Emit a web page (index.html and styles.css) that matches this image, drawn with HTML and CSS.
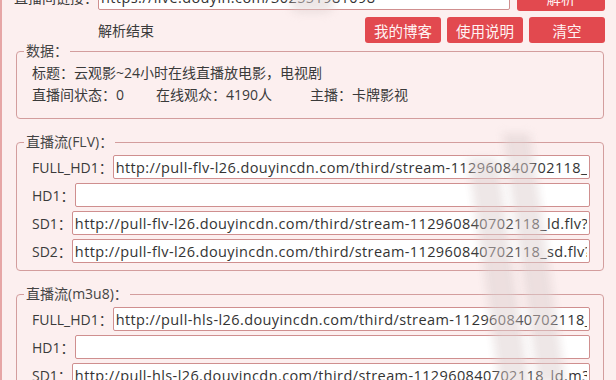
FILE: index.html
```html
<!DOCTYPE html>
<html lang="zh-CN">

<head>
    <meta charset="UTF-8">
    <meta name="viewport" content="width=device-width, initial-scale=1.0">
    <title>抖音直播解析</title>
    <link rel="stylesheet" href="styles.css">
</head>

<body>
    <div class="window">
        <div class="urlRow">
            <label class="urlLabel">直播间链接：</label>
            <input class="urlInput" type="text" value="https://live.douyin.com/302551981098">
            <button class="redBtn parseBtn">解析</button>
        </div>

        <div class="toolRow">
            <span class="status">解析结束</span>
            <button class="redBtn toolBtn">我的博客</button>
            <button class="redBtn toolBtn">使用说明</button>
            <button class="redBtn toolBtn">清空</button>
        </div>

        <fieldset class="group dataGroup">
            <legend>数据：</legend>
            <div class="dataLine">标题：云观影~24小时在线直播放电影，电视剧</div>
            <div class="dataLine">
                <span class="stat1">直播间状态：0</span>
                <span class="stat2">在线观众：4190人</span>
                <span>主播：卡牌影视</span>
            </div>
        </fieldset>

        <fieldset class="group">
            <legend>直播流(FLV)：</legend>
            <div class="streamRow">
                <label>FULL_HD1：</label>
                <input type="text" value="http://pull-flv-l26.douyincdn.com/third/stream-112960840702118_or4.flv?keeptime=00093a80">
            </div>
            <div class="streamRow">
                <label>HD1：</label>
                <input type="text" value="">
            </div>
            <div class="streamRow">
                <label>SD1：</label>
                <input type="text" value="http://pull-flv-l26.douyincdn.com/third/stream-112960840702118_ld.flv?keeptime=00093a80">
            </div>
            <div class="streamRow">
                <label>SD2：</label>
                <input type="text" value="http://pull-flv-l26.douyincdn.com/third/stream-112960840702118_sd.flv?keeptime=00093a80">
            </div>
        </fieldset>

        <fieldset class="group">
            <legend>直播流(m3u8)：</legend>
            <div class="streamRow">
                <label>FULL_HD1：</label>
                <input type="text" value="http://pull-hls-l26.douyincdn.com/third/stream-112960840702118_or4.m3u8?keeptime=00093a80">
            </div>
            <div class="streamRow">
                <label>HD1：</label>
                <input type="text" value="">
            </div>
            <div class="streamRow">
                <label>SD1：</label>
                <input type="text" value="http://pull-hls-l26.douyincdn.com/third/stream-112960840702118_ld.m3u8?keeptime=00093a80">
            </div>
        </fieldset>

        <!-- privacy blur over the screenshot -->
        <div class="blur blurTop"></div>
        <div class="blur blurA"></div>
        <div class="blur blurB"></div>
    </div>
</body>

</html>
```

FILE: styles.css
```css
* {
    margin: 0px;
    padding: 0px;
    box-sizing: border-box;
}

body {
    background-color: #fcefef;
    font-family: "Open Sans", "Noto Sans CJK SC", sans-serif;
    font-size: 14px;
    color: #3a3a3a;
    overflow: hidden;
}

.window {
    position: relative;
    border-left: 2px solid #e6a6a6;
    padding: 0px 11px 0px 12px;
    margin-top: -17px;
    height: 400px;
}

.urlRow {
    display: flex;
    align-items: center;
    height: 28px;
}

.urlLabel {
    width: 84px;
    flex-shrink: 0;
    white-space: nowrap;
}

.urlInput {
    width: 412px;
    height: 25px;
    flex-shrink: 0;
}

input {
    font-family: inherit;
    font-size: 14.5px;
    letter-spacing: 0.4px;
    color: #333;
    background-color: #fff;
    border: 1px solid #cf8f8f;
    border-radius: 2px;
    padding: 0px 2px;
    outline: none;
}

.redBtn {
    background-color: #e2494f;
    color: #fff3f3;
    border: none;
    border-radius: 3px;
    font-family: inherit;
    font-size: 14.5px;
    cursor: pointer;
}

.parseBtn {
    width: 88px;
    height: 28px;
    margin-left: auto;
}

.toolRow {
    display: flex;
    align-items: center;
    height: 26px;
    margin-top: 6px;
    gap: 6px;
}

.status {
    margin-left: 84px;
    margin-right: auto;
}

.toolBtn {
    width: 76px;
    height: 26px;
}

.group {
    min-width: 0;
    border: 1px solid #d39d9d;
    border-radius: 4px;
    margin: 13px 1px 0px 2px;
    padding: 0px 13px 7px 15px;
}

.group legend {
    margin-left: -8px;
    padding: 0px 2px;
    line-height: 20px;
    color: #444;
}

.dataGroup {
    margin-top: -2px;
    padding-top: 1px;
    padding-bottom: 12px;
}

.dataLine {
    display: flex;
    line-height: 22px;
}

.stat1 {
    width: 124px;
}

.stat2 {
    width: 154px;
}

.streamRow {
    display: flex;
    align-items: center;
    margin-top: 4px;
}

.streamRow:first-of-type {
    margin-top: 3px;
}

.streamRow label {
    white-space: nowrap;
}

.streamRow input {
    flex: 1;
    min-width: 0;
    height: 24px;
}

.blur {
    position: absolute;
    background-color: rgba(222, 208, 208, 0.5);
    filter: blur(4px);
}

.blurTop {
    left: 288px;
    top: 10px;
    width: 44px;
    height: 20px;
    border-radius: 10px;
}

.blurA {
    left: 482px;
    top: 175px;
    width: 30px;
    height: 230px;
    transform: skewX(8deg);
}

.blurB {
    left: 518px;
    top: 150px;
    width: 28px;
    height: 250px;
    transform: skewX(8deg);
}
```
